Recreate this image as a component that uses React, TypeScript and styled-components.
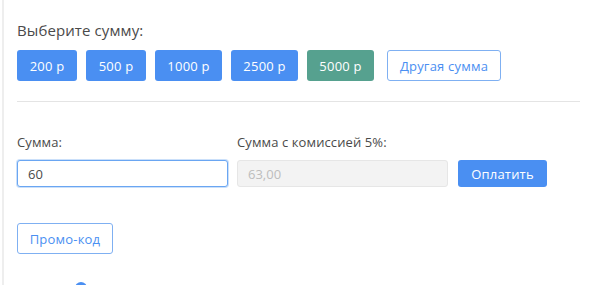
import React from "react";
import styled, { createGlobalStyle } from "styled-components";

const Global = createGlobalStyle`
  html, body { margin: 0; padding: 0; background: #fff; }
  body { font-family: "Open Sans", "Liberation Sans", sans-serif; }
  * { box-sizing: border-box; }
`;

const Page = styled.div`
  width: 591px;
  height: 285px;
  overflow: hidden;
  position: relative;
  display: flex;
`;

const EdgeLine = styled.div`
  width: 2px;
  margin-left: 2px;
  background: #eeeeee;
  flex: none;
`;

const Content = styled.div`
  flex: 1;
  padding: 20px 11px 0 13px;
  display: flex;
  flex-direction: column;
`;

const Title = styled.div`
  font-size: 15px;
  line-height: 20px;
  color: #4a4a4a;
  letter-spacing: 0.1px;
`;

const AmountRow = styled.div`
  display: flex;
  gap: 9px;
  margin-top: 10px;
`;

const Chip = styled.button<{ $active?: boolean; $outline?: boolean; $w: number }>`
  width: ${(p) => p.$w}px;
  height: 31px;
  border-radius: 3px;
  font-family: inherit;
  font-size: 13px;
  letter-spacing: 0.2px;
  padding: 0;
  cursor: pointer;
  background: ${(p) => (p.$outline ? "#fff" : p.$active ? "#56a18f" : "#4a8ff2")};
  color: ${(p) => (p.$outline ? "#4a8ff2" : "#fff")};
  border: ${(p) => (p.$outline ? "1px solid #7fb0f2" : "none")};
  margin-left: ${(p) => (p.$outline ? "4px" : "0")};
`;

const Divider = styled.hr`
  border: none;
  border-top: 1px solid #e4e4e4;
  margin: 20px 0 0;
  height: 0;
`;

const FormRow = styled.div`
  display: flex;
  align-items: flex-end;
  gap: 9px;
  margin-top: 32px;
`;

const Field = styled.div`
  display: flex;
  flex-direction: column;
  gap: 10px;
  width: 211px;
`;

const Label = styled.div`
  font-size: 13px;
  line-height: 16px;
  color: #4a4a4a;
  letter-spacing: 0.1px;
`;

const Input = styled.input<{ $disabledLook?: boolean }>`
  height: 27px;
  width: 100%;
  border-radius: 3px;
  font-family: inherit;
  font-size: 13px;
  padding: 0 10px;
  outline: none;
  color: ${(p) => (p.$disabledLook ? "#bdbdbd" : "#4a4a4a")};
  background: ${(p) => (p.$disabledLook ? "#f3f3f3" : "#fff")};
  border: 1px solid ${(p) => (p.$disabledLook ? "#e6e6e6" : "#6aa6f2")};
  box-shadow: ${(p) => (p.$disabledLook ? "none" : "0 0 0 1px rgba(106,166,242,0.35)")};
`;

const PayButton = styled.button`
  height: 27px;
  width: 89px;
  margin-left: 1px;
  border: none;
  border-radius: 3px;
  background: #4a8ff2;
  color: #fff;
  font-family: inherit;
  font-size: 13px;
  letter-spacing: 0.2px;
  cursor: pointer;
`;

const PromoButton = styled.button`
  align-self: flex-start;
  margin-top: 36px;
  width: 96px;
  height: 31px;
  border: 1px solid #7fb0f2;
  border-radius: 3px;
  background: #fff;
  color: #4a8ff2;
  font-family: inherit;
  font-size: 13px;
  letter-spacing: 0.2px;
  cursor: pointer;
`;

const Dot = styled.div`
  position: absolute;
  left: 75px;
  top: 282px;
  width: 12px;
  height: 12px;
  border-radius: 50%;
  background: #4a8ff2;
`;

const amounts = [
  { label: "200 р", w: 60 },
  { label: "500 р", w: 60 },
  { label: "1000 р", w: 67 },
  { label: "2500 р", w: 67 },
  { label: "5000 р", w: 67, active: true },
];

export default function App() {
  return (
    <>
      <Global />
      <Page>
        <EdgeLine />
        <Content>
          <Title>Выберите сумму:</Title>
          <AmountRow>
            {amounts.map((a) => (
              <Chip key={a.label} $w={a.w} $active={a.active}>
                {a.label}
              </Chip>
            ))}
            <Chip $w={114} $outline>
              Другая сумма
            </Chip>
          </AmountRow>
          <Divider />
          <FormRow>
            <Field>
              <Label>Сумма:</Label>
              <Input defaultValue="60" />
            </Field>
            <Field>
              <Label>Сумма с комиссией 5%:</Label>
              <Input $disabledLook readOnly value="63,00" />
            </Field>
            <PayButton>Оплатить</PayButton>
          </FormRow>
          <PromoButton>Промо-код</PromoButton>
        </Content>
        <Dot />
      </Page>
    </>
  );
}
